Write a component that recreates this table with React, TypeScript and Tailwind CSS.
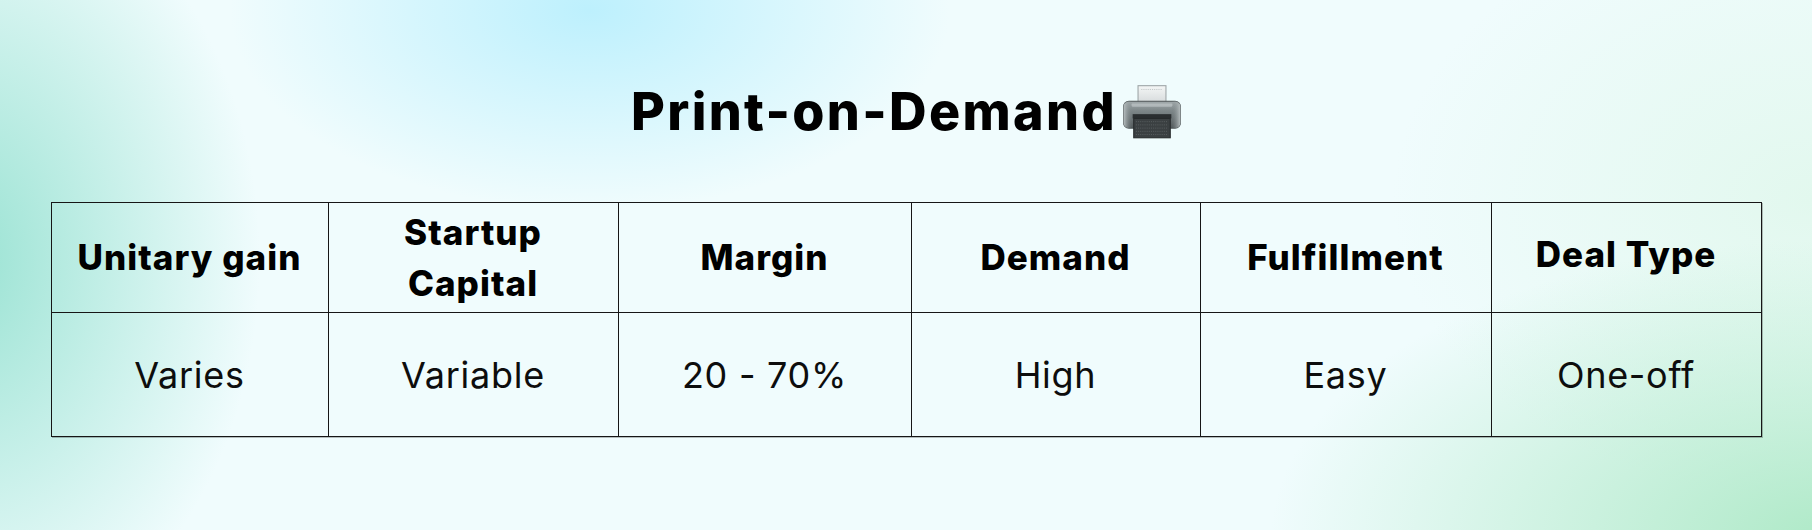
import React from "react";

const headers = ["Unitary gain", "Startup Capital", "Margin", "Demand", "Fulfillment", "Deal Type"];
const values = ["Varies", "Variable", "20 - 70%", "High", "Easy", "One-off"];
const widths = [277, 290, 293, 289, 291, 270];

function PrinterIcon() {
  return (
    <svg width="58" height="54" viewBox="0 0 54 50" aria-hidden="true">
      <defs>
        <linearGradient id="body" x1="0" y1="0" x2="0" y2="1">
          <stop offset="0" stopColor="#a3abad" />
          <stop offset="0.35" stopColor="#7d8688" />
          <stop offset="1" stopColor="#545b5d" />
        </linearGradient>
        <linearGradient id="side" x1="0" y1="0" x2="1" y2="0">
          <stop offset="0" stopColor="#b9c0c1" />
          <stop offset="0.15" stopColor="#7f888a" stopOpacity="0" />
          <stop offset="0.85" stopColor="#7f888a" stopOpacity="0" />
          <stop offset="1" stopColor="#b9c0c1" />
        </linearGradient>
        <linearGradient id="paper" x1="0" y1="0" x2="0" y2="1">
          <stop offset="0" stopColor="#f4f6f6" />
          <stop offset="1" stopColor="#cfd4d5" />
        </linearGradient>
      </defs>
      <rect x="14" y="0.5" width="26" height="20" fill="url(#paper)" stroke="#9da4a6" strokeWidth="1" />
      <line x1="17" y1="4" x2="37" y2="4" stroke="#c3c8c9" strokeDasharray="1 1" />
      <rect x="0.5" y="15" width="53" height="25" rx="5" fill="url(#body)" stroke="#4d5456" strokeWidth="1" />
      <rect x="0.5" y="15" width="53" height="25" rx="5" fill="url(#side)" />
      <rect x="8" y="17" width="38" height="3" rx="1" fill="#c7cdce" opacity="0.6" />
      <rect x="9" y="27" width="36" height="4" fill="#2a2e30" />
      <rect x="10" y="31" width="34" height="18" fill="#3b4042" stroke="#262a2b" strokeWidth="1" />
      <g stroke="#5b6163" strokeWidth="0.8" strokeDasharray="1 1">
        <line x1="12" y1="34" x2="42" y2="34" />
        <line x1="12" y1="37" x2="42" y2="37" />
        <line x1="12" y1="40" x2="42" y2="40" />
        <line x1="12" y1="43" x2="42" y2="43" />
        <line x1="12" y1="46" x2="42" y2="46" />
      </g>
    </svg>
  );
}

export default function App() {
  return (
    <div
      className="w-full h-[530px] overflow-hidden flex flex-col items-center bg-[#f0fcfd] bg-[radial-gradient(ellipse_360px_200px_at_590px_10px,#bdf0fd,transparent),radial-gradient(ellipse_300px_400px_at_-40px_260px,#98e2d2,transparent),radial-gradient(ellipse_560px_300px_at_1830px_540px,#aee9c7,transparent),radial-gradient(ellipse_420px_300px_at_1812px_200px,#e2f8ee,transparent)]"
      style={{ fontFamily: "Inter, 'Noto Sans', sans-serif" }}
    >
      <h1 className="mt-[80px] h-[64px] flex items-center gap-[6px] text-[52px] leading-none font-extrabold text-black tracking-[0.045em]">
        <span>Print-on-Demand</span>
        <PrinterIcon />
      </h1>

      <table className="mt-[58px] border-collapse border border-[#161616] shadow-[1px_1px_0_rgba(0,0,0,0.25)] table-fixed">
        <colgroup>
          {widths.map((w, i) => (
            <col key={i} style={{ width: w }} />
          ))}
        </colgroup>
        <thead>
          <tr className="h-[110px]">
            {headers.map((h, i) => (
              <th
                key={h}
                className={`border border-[#161616] text-center align-middle text-[35px] leading-[51px] font-extrabold text-black tracking-[0.03em] ${
                  i === 5 ? "pb-[6px]" : ""
                } ${i === 1 ? "px-[50px]" : "px-2"}`}
              >
                {h}
              </th>
            ))}
          </tr>
        </thead>
        <tbody>
          <tr className="h-[124px]">
            {values.map((v) => (
              <td
                key={v}
                className="border border-[#161616] px-2 text-center align-middle text-[36px] leading-none font-normal text-[#0d0d0d] tracking-[0.02em]"
              >
                {v}
              </td>
            ))}
          </tr>
        </tbody>
      </table>
    </div>
  );
}
